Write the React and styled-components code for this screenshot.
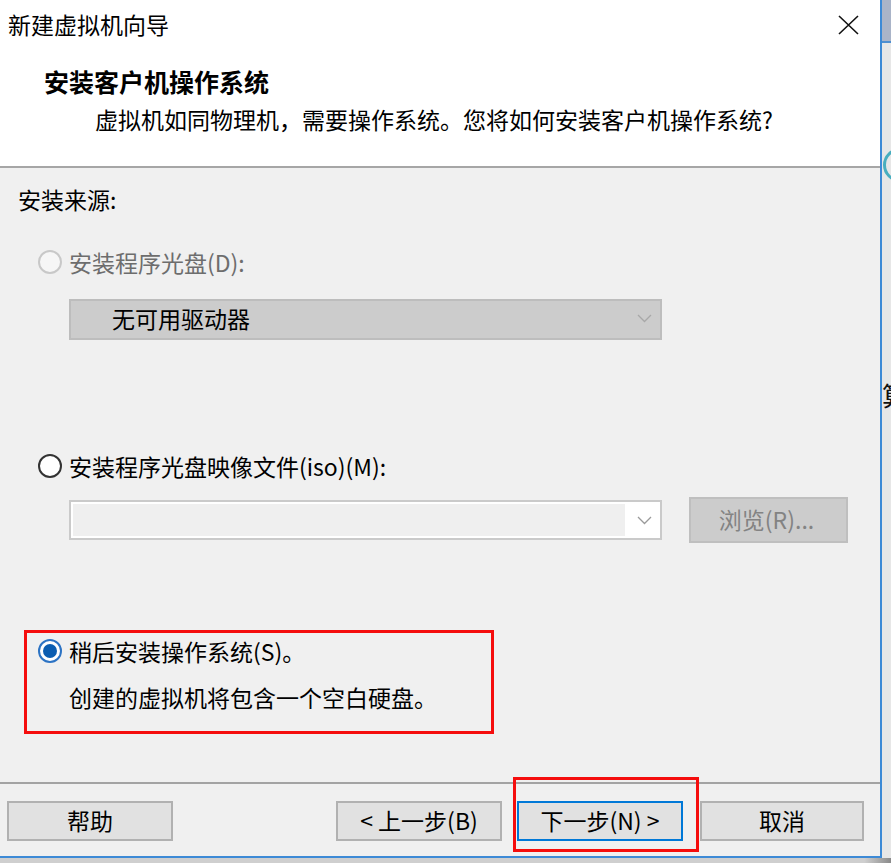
import React from "react";
import styled, { createGlobalStyle } from "styled-components";

const GlobalStyle = createGlobalStyle`
  html, body { margin: 0; padding: 0; background: #d3d3d3; }
  body { font-family: "Noto Sans CJK SC", "Noto Sans", sans-serif; }
  * { box-sizing: border-box; }
  #root { width: 891px; height: 863px; overflow: hidden; }
`;

const Page = styled.div`
  width: 891px;
  height: 863px;
  display: flex;
  flex-direction: column;
  background: #d3d3d3;
`;

const TopRow = styled.div`
  display: flex;
  height: 858px;
`;

const Dialog = styled.div`
  width: 882px;
  height: 858px;
  display: flex;
  flex-direction: column;
  border-right: 2px solid #3d8ad6;
  border-bottom: 2px solid #3d8ad6;
  background: #f0f0f0;
  font-size: 23px;
  line-height: 32px;
  color: #000;
`;

const WhiteArea = styled.div`
  background: #fff;
  height: 168px;
  border-bottom: 2px solid #a6a6a6;
  display: flex;
  flex-direction: column;
`;

const TitleBar = styled.div`
  height: 50px;
  display: flex;
  align-items: center;
  justify-content: space-between;
  padding: 0 21px 3px 8px;
`;

const CloseButton = styled.span`
  display: flex;
  margin-top: 3px;
`;

const Header = styled.div`
  padding: 15px 0 0 44px;
`;

const Heading = styled.div`
  font-weight: 700;
  font-size: 25px;
`;

const Subtitle = styled.div`
  margin: 6px 0 0 51px;
`;

const Body = styled.div`
  flex: 1;
  padding: 15px 0 0 18px;
  display: flex;
  flex-direction: column;
  align-items: flex-start;
`;

const SectionLabel = styled.div``;

const RadioRow = styled.div`
  display: flex;
  align-items: center;
  gap: 7px;
  margin: ${(p) => p.$mt || 0}px 0 0 ${(p) => (p.$ml === undefined ? 20 : p.$ml)}px;
  color: ${(p) => (p.$disabled ? "#6d6d6d" : "#000")};
`;

const Radio = styled.span`
  width: 24px;
  height: 24px;
  border-radius: 50%;
  flex: none;
  display: flex;
  align-items: center;
  justify-content: center;
  background: ${(p) => (p.$variant === "disabled" ? "#f6f6f6" : "#fff")};
  border: 2px solid
    ${(p) =>
      p.$variant === "disabled" ? "#c8c8c8" : p.$variant === "checked" ? "#2c73c4" : "#333"};
`;

const RadioDot = styled.span`
  width: 14px;
  height: 14px;
  border-radius: 50%;
  background: #0b5db1;
`;

const DisabledCombo = styled.div`
  margin: 21px 0 0 51px;
  width: 593px;
  height: 41px;
  background: #cccccc;
  border: 2px solid #bdbdbd;
  display: flex;
  align-items: center;
  justify-content: space-between;
  padding: 0 8px 3px 41px;
`;

const FileRow = styled.div`
  margin: 15px 0 0 51px;
  display: flex;
  align-items: center;
  gap: 27px;
  height: 46px;
`;

const Combo = styled.div`
  width: 593px;
  height: 40px;
  background: #fff;
  border: 2px solid #cacaca;
  padding: 2px 8px 2px 2px;
  display: flex;
  align-items: stretch;
  justify-content: space-between;
`;

const ComboField = styled.div`
  width: 552px;
  background: #efefef;
`;

const ChevronWrap = styled.span`
  display: flex;
  align-items: center;
`;

const BrowseButton = styled.div`
  width: 159px;
  height: 46px;
  background: #cccccc;
  border: 2px solid #bfbfbf;
  color: #838383;
  display: flex;
  align-items: center;
  justify-content: center;
  padding: 0 4px 3px 0;
`;

const HighlightBox = styled.div`
  margin: 87px 0 0 6px;
  width: 470px;
  border: 3px solid #f50d0d;
  padding: 2px 0 18px 11px;
`;

const Description = styled.div`
  margin: 14px 0 0 31px;
`;

const Footer = styled.div`
  height: 74px;
  border-top: 2px solid #a3a3a3;
  padding: 17px 16px 0 7px;
  display: flex;
  align-items: flex-start;
`;

const Button = styled.div`
  width: ${(p) => p.$w || 166}px;
  height: 40px;
  background: #e1e1e1;
  border: 2px solid ${(p) => (p.$primary ? "#0078d7" : "#b1b1b1")};
  display: flex;
  align-items: center;
  justify-content: center;
  padding-bottom: 3px;
  margin-left: ${(p) => p.$ml || 0}px;
  flex: none;
  white-space: pre;
`;

const Spacer = styled.div`
  flex: 1;
`;

const Annotated = styled.div`
  position: relative;
  margin-left: 15px;
`;

const AnnotationFrame = styled.div`
  position: absolute;
  top: -24px;
  left: -4px;
  right: -16px;
  bottom: -11px;
  border: 3px solid #f50d0d;
  pointer-events: none;
`;

const RightStrip = styled.div`
  width: 9px;
  display: flex;
  flex-direction: column;
  overflow: hidden;
  background: #e7e7e7;
`;

const StripBand = styled.div`
  height: 43px;
  background: #aab4c8;
  border-bottom: 2px solid #4f8fd0;
  flex: none;
`;

const StripArc = styled.div`
  margin: 105px 0 0 1px;
  width: 34px;
  height: 34px;
  border: 3px solid #48aebf;
  border-radius: 50%;
  flex: none;
`;

const StripText = styled.div`
  margin-top: 198px;
  width: 30px;
  font-size: 26px;
  line-height: 30px;
  color: #111;
  flex: none;
`;

const BottomStrip = styled.div`
  height: 5px;
  background: linear-gradient(90deg, #cfcfcf 0%, #cfcfcf 97%, #8a8a8a 100%);
`;

const CloseIcon = () => (
  <svg width="21" height="20" viewBox="0 0 21 20">
    <path d="M1 1 L20 19 M20 1 L1 19" stroke="#111" strokeWidth="1.6" fill="none" />
  </svg>
);

const Chevron = ({ color }) => (
  <svg width="15" height="9" viewBox="0 0 15 9">
    <polyline points="1,1 7.5,7.5 14,1" stroke={color} strokeWidth="1.3" fill="none" />
  </svg>
);

export default function App() {
  return (
    <>
      <GlobalStyle />
      <Page>
        <TopRow>
          <Dialog>
            <WhiteArea>
              <TitleBar>
                <span>新建虚拟机向导</span>
                <CloseButton>
                  <CloseIcon />
                </CloseButton>
              </TitleBar>
              <Header>
                <Heading>安装客户机操作系统</Heading>
                <Subtitle>虚拟机如同物理机，需要操作系统。您将如何安装客户机操作系统?</Subtitle>
              </Header>
            </WhiteArea>
            <Body>
              <SectionLabel>安装来源:</SectionLabel>
              <RadioRow $mt={31} $disabled>
                <Radio $variant="disabled" />
                <span>安装程序光盘(D):</span>
              </RadioRow>
              <DisabledCombo>
                <span>无可用驱动器</span>
                <ChevronWrap>
                  <Chevron color="#a8a8a8" />
                </ChevronWrap>
              </DisabledCombo>
              <RadioRow $mt={110}>
                <Radio $variant="normal" />
                <span>安装程序光盘映像文件(iso)(M):</span>
              </RadioRow>
              <FileRow>
                <Combo>
                  <ComboField />
                  <ChevronWrap>
                    <Chevron color="#9a9a9a" />
                  </ChevronWrap>
                </Combo>
                <BrowseButton>浏览(R)...</BrowseButton>
              </FileRow>
              <HighlightBox>
                <RadioRow $ml={0}>
                  <Radio $variant="checked">
                    <RadioDot />
                  </Radio>
                  <span>稍后安装操作系统(S)。</span>
                </RadioRow>
                <Description>创建的虚拟机将包含一个空白硬盘。</Description>
              </HighlightBox>
            </Body>
            <Footer>
              <Button>帮助</Button>
              <Spacer />
              <Button>{"< 上一步(B)"}</Button>
              <Annotated>
                <Button $primary>{"下一步(N) >"}</Button>
                <AnnotationFrame />
              </Annotated>
              <Button $w={164} $ml={17}>取消</Button>
            </Footer>
          </Dialog>
          <RightStrip>
            <StripBand />
            <StripArc />
            <StripText>算</StripText>
          </RightStrip>
        </TopRow>
        <BottomStrip />
      </Page>
    </>
  );
}
